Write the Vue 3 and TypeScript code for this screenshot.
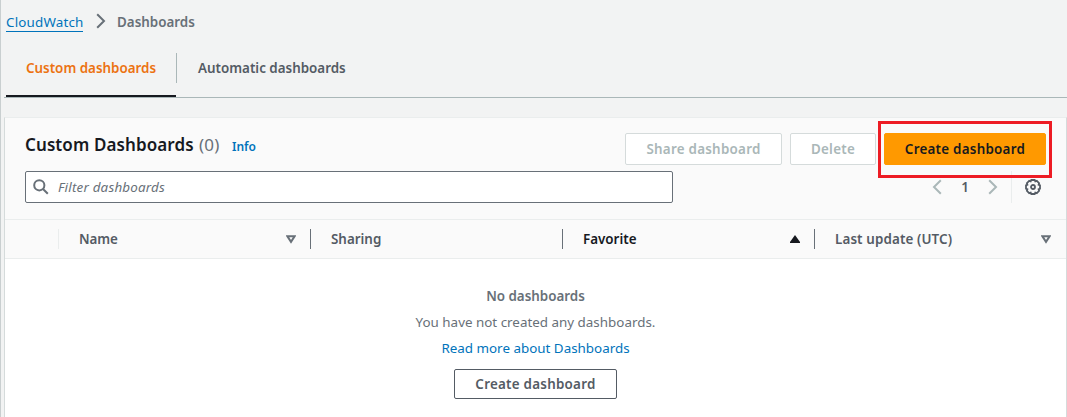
<script setup lang="ts">
interface Column {
  label: string
  sort: 'none' | 'idle' | 'ascending'
}

const columns: Column[] = [
  { label: 'Name', sort: 'idle' },
  { label: 'Sharing', sort: 'none' },
  { label: 'Favorite', sort: 'ascending' },
  { label: 'Last update (UTC)', sort: 'idle' },
]
</script>

<template>
  <main class="page">
    <nav class="crumbs">
      <a class="crumb-link">CloudWatch</a>
      <svg class="crumb-arrow" width="10" height="16" viewBox="0 0 10 16"><path d="M1.2 1.2 8 8 1.2 14.8" /></svg>
      <span class="crumb-current">Dashboards</span>
    </nav>

    <div class="tabs">
      <div class="tab active">Custom dashboards</div>
      <div class="tab">Automatic dashboards</div>
    </div>

    <section class="panel">
      <header class="head">
        <div class="title-row">
          <h1 class="title">Custom Dashboards</h1>
          <span class="count">(0)</span>
          <a class="info">Info</a>
          <div class="actions">
            <button class="btn disabled share">Share dashboard</button>
            <button class="btn disabled delete">Delete</button>
            <div class="primary-wrap">
              <button class="btn primary">Create dashboard</button>
              <div class="highlight"></div>
            </div>
          </div>
        </div>
        <div class="filter-row">
          <div class="search">
            <svg width="16" height="16" viewBox="0 0 16 16"><circle cx="6.3" cy="6.3" r="5.1" /><path d="m10 10 4.8 4.8" /></svg>
            <span class="placeholder">Filter dashboards</span>
          </div>
          <div class="pager">
            <svg class="arrow" width="10" height="16" viewBox="0 0 10 16"><path d="M8.8 1.2 2 8l6.8 6.8" /></svg>
            <span class="page-number">1</span>
            <svg class="arrow" width="10" height="16" viewBox="0 0 10 16"><path d="M1.2 1.2 8 8l-6.8 6.8" /></svg>
          </div>
          <div class="settings">
            <svg width="16" height="16" viewBox="0 0 16 16">
              <path class="gear-body" d="M6.3 1h3.4l.6 1.4 1.5-.5 2.3 2.3-.5 1.5 1.4.6v3.4l-1.4.6.5 1.5-2.3 2.3-1.5-.5-.6 1.4H6.3l-.6-1.4-1.5.5-2.3-2.3.5-1.5L1 9.7V6.3l1.4-.6-.5-1.5 2.3-2.3 1.5.5z" />
              <circle cx="8" cy="8" r="2" />
            </svg>
          </div>
        </div>
      </header>

      <div class="columns">
        <div class="select-cell"></div>
        <div v-for="(col, i) in columns" :key="col.label" class="col" :class="['c' + i, { sorted: col.sort === 'ascending' }]">
          <span class="label">{{ col.label }}</span>
          <svg v-if="col.sort === 'idle'" width="10" height="9" viewBox="0 0 10 9"><path class="outline" d="M1.4 1.3h7.2L5 6.9z" /></svg>
          <svg v-if="col.sort === 'ascending'" width="10" height="9" viewBox="0 0 10 9"><path class="solid" d="M5 0 10 7v1H0V7z" /></svg>
        </div>
      </div>

      <div class="empty">
        <b class="empty-title">No dashboards</b>
        <span class="empty-text">You have not created any dashboards.</span>
        <a class="empty-link">Read more about Dashboards</a>
        <button class="btn normal">Create dashboard</button>
      </div>
    </section>
  </main>
</template>

<style>
body { background: #f2f3f3; }
</style>

<style scoped>
* { box-sizing: border-box; }
.page {
  height: 417px;
  overflow: hidden;
  border-left: 1px solid #c9cfd0;
  background: #f2f3f3;
  font: 13.4px/20px "Noto Sans", "Open Sans", sans-serif;
  letter-spacing: 0;
  color: #545b64;
  white-space: nowrap;
}
svg { display: block; fill: none; stroke: #687078; stroke-width: 2; flex: none; }
.crumbs { display: flex; height: 44px; padding: 12px 0 0 5px; }
.crumb-link { width: 77px; height: 20px; border-bottom: 1px solid #0073bb; color: #0073bb; letter-spacing: 0.17px; }
.crumb-arrow { margin: 1px 0 0 13px; }
.crumb-current { margin-left: 11px; color: #687078; font-weight: 600; }
.tabs { display: flex; height: 54px; margin-left: 3px; padding-left: 2px; border-bottom: 1px solid #aab7b8; font-weight: 600; }
.tab { height: 53px; padding: 14px 20px 0; position: relative; }
.tab.active { width: 170px; border-bottom: 2px solid #16191f; color: #ec7211; }
.tab.active::after { content: ""; position: absolute; right: -1px; top: 9px; width: 1px; height: 30px; background: #aab7b8; }
.tab:last-child { padding-left: 22px; }
.panel { height: 310px; margin: 19px 0 0 3px; width: 1063px; border: 1px solid #d5dbdb; border-top-color: #eaeded; background: #fff; }
.head { height: 102px; background: #fafafa; border-bottom: 1px solid #eaeded; padding: 15px 20px 0 20px; }
.title-row { display: flex; height: 38px; }
.title { margin: 0; width: 174px; font-size: 17px; line-height: 24px; font-weight: 600; letter-spacing: 0.1px; color: #16191f; }
.count { width: 33px; font-size: 17px; line-height: 24px; letter-spacing: 0.2px; color: #687078; }
.info { font-size: 12px; line-height: 28px; font-weight: 600; color: #0073bb; }
.actions { display: flex; gap: 8px; margin-left: auto; }
.btn { height: 32px; margin: 0; padding: 0; border: 1px solid #545b64; border-radius: 2px; background: #fff; color: #545b64; font: 600 13.4px/20px "Noto Sans", "Open Sans", sans-serif; letter-spacing: 0.25px; white-space: nowrap; }
.disabled { border-color: #d5dbdb; color: #aab7b8; }
.share { width: 157px; }
.delete { width: 86px; }
.primary-wrap { position: relative; width: 162px; height: 32px; }
.primary { width: 162px; border-color: #ff9900; background: #ff9900; color: #16191f; }
.highlight { position: absolute; left: -6px; top: -12px; width: 174px; height: 57px; border: 3px solid #ed1c24; }
.filter-row { display: flex; height: 32px; }
.search { display: flex; width: 648px; height: 32px; padding: 7px 8px 0 7px; border: 1px solid #687078; border-radius: 2px; background: #fff; }
.placeholder { margin: -2px 0 0 9px; font-style: italic; letter-spacing: 0.2px; color: #687078; }
.pager { display: flex; align-items: center; justify-content: space-between; width: 66px; margin-left: auto; }
.arrow { stroke: #aab7b8; }
.page-number { font-weight: 600; }
.settings { display: flex; align-items: center; width: 35px; height: 32px; margin-left: 13px; padding-left: 13px; border-left: 1px solid #eaeded; }
.settings svg { stroke: #545b64; stroke-width: 1.8; }
.columns { display: flex; height: 39px; align-items: center; background: #fafafa; border-bottom: 1px solid #eaeded; font-weight: 600; }
.select-cell { width: 54px; height: 20px; border-right: 1px solid #eaeded; }
.col { display: flex; align-items: center; justify-content: space-between; width: 252px; height: 20px; padding: 0 14px 0 20px; border-right: 1px solid #687078; }
.col.c0 { letter-spacing: -0.1px; }
.col.c3 { border-right: 0; width: 250px; letter-spacing: 0.12px; }
.sorted { color: #16191f; }
.col .solid { fill: #16191f; stroke: none; }
.empty { display: flex; flex-direction: column; align-items: center; padding-top: 27px; color: #687078; }
.empty > * { margin-bottom: 6px; }
.empty-title { font-weight: 600; }
.empty-link { color: #0073bb; }
.normal { width: 163px; height: 30px; margin-top: 5px; }
</style>
